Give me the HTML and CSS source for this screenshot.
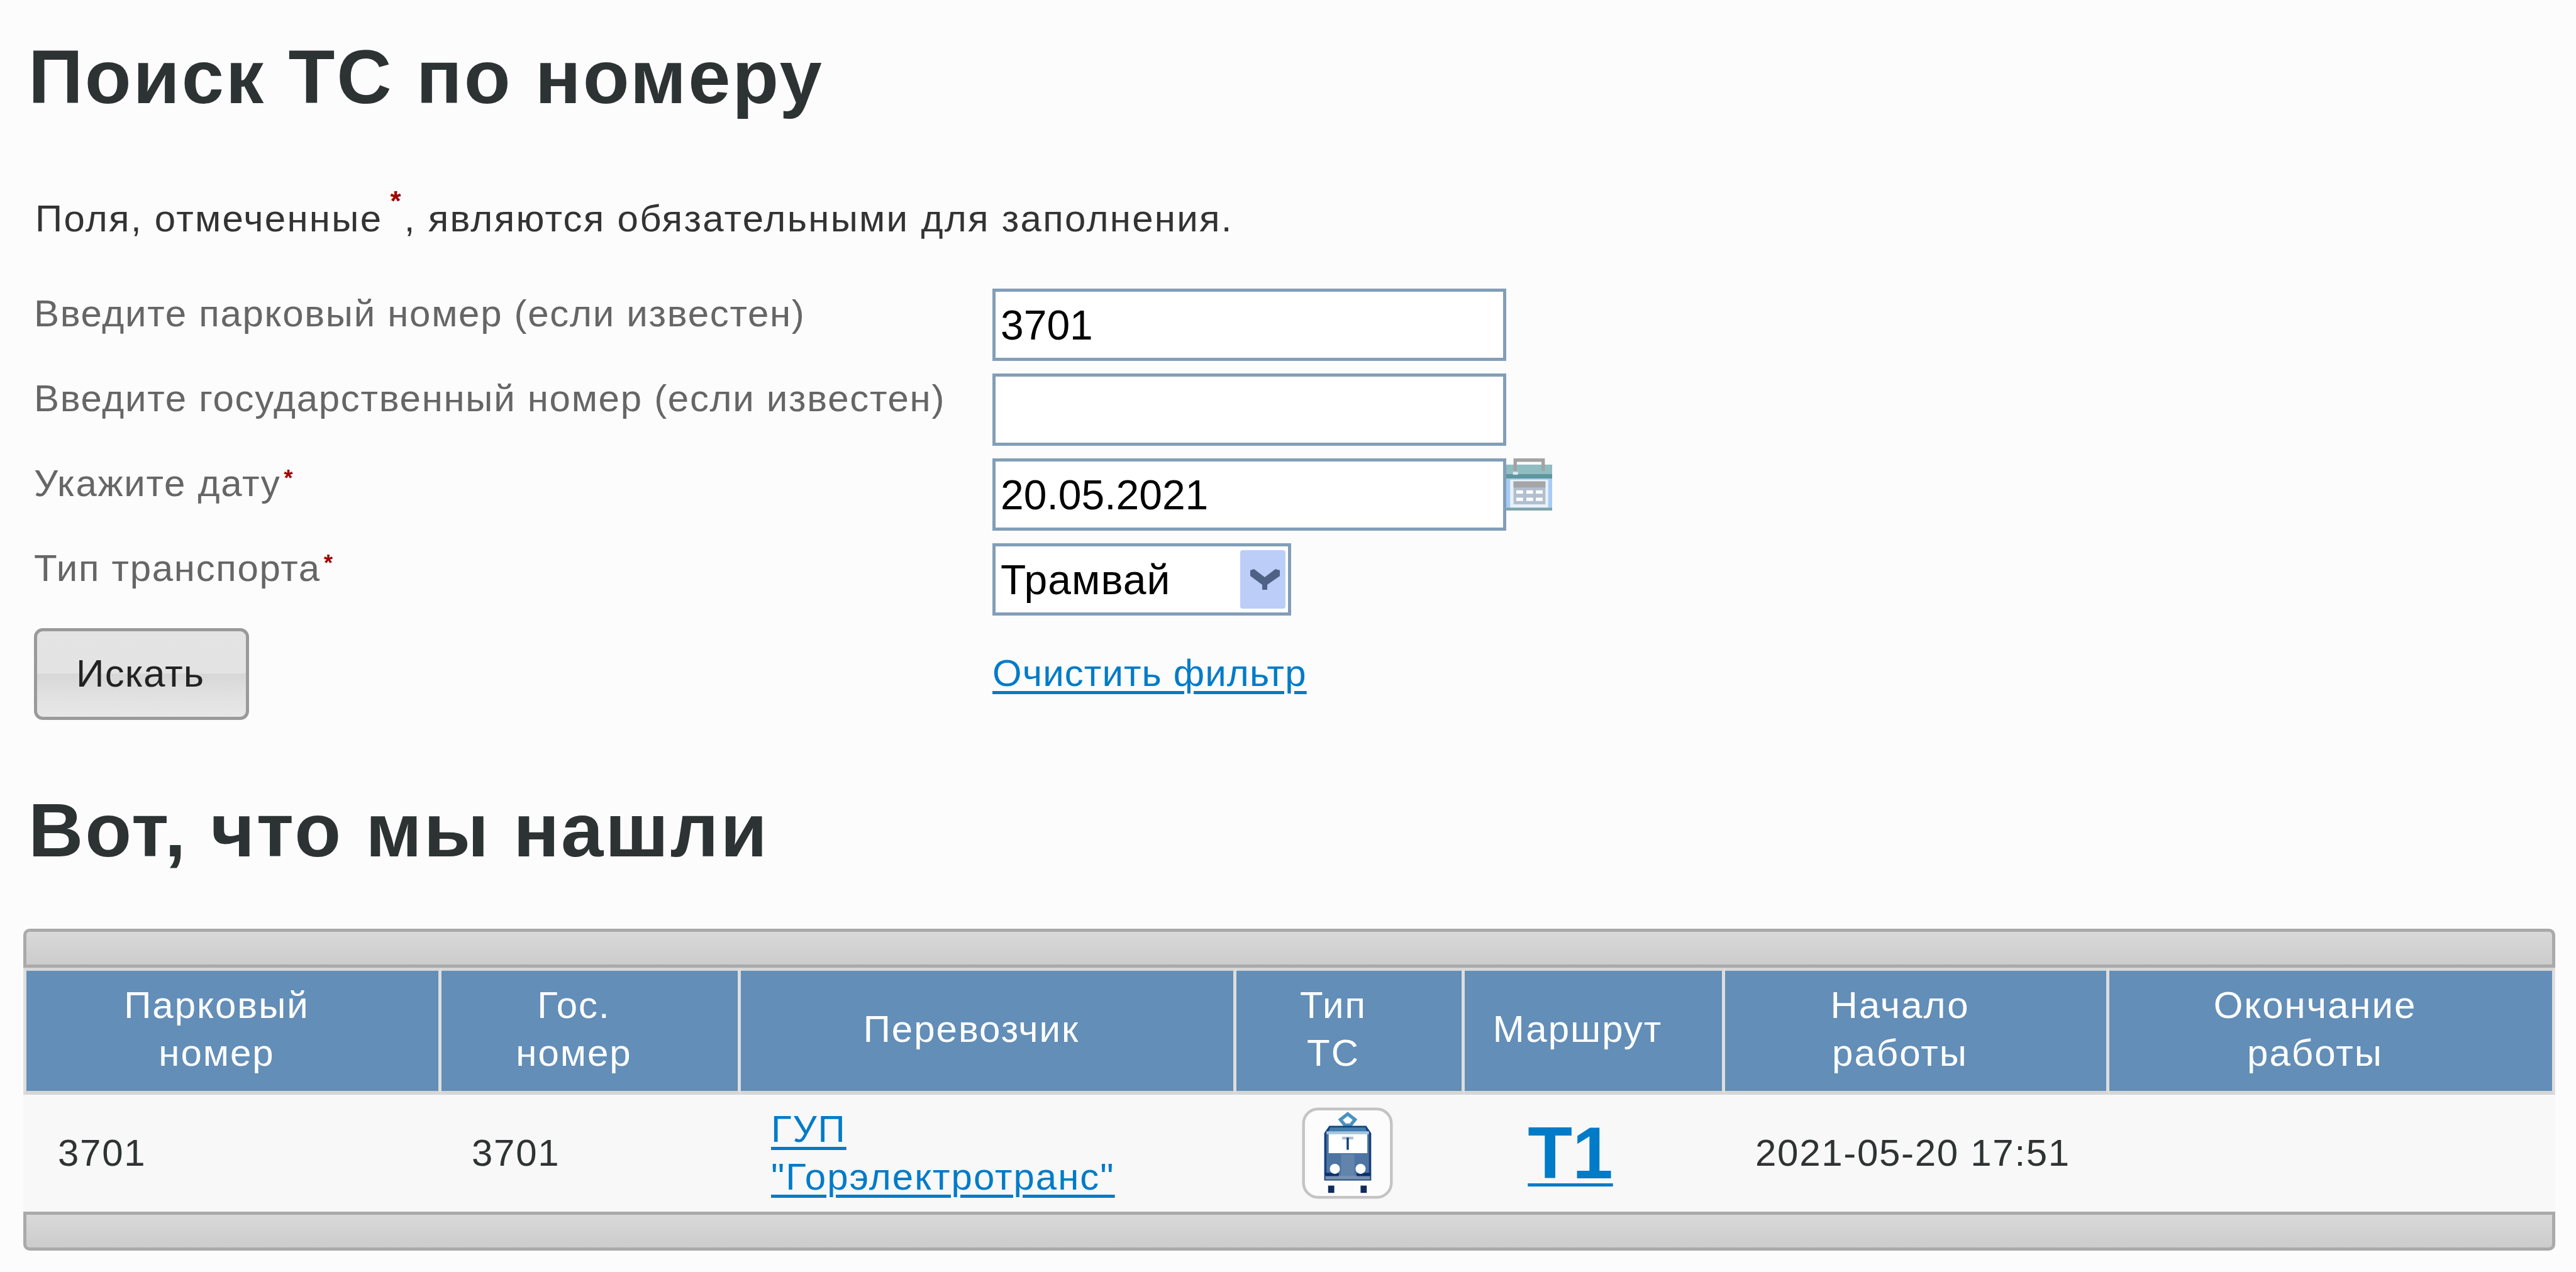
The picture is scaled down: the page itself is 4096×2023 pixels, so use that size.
FILE: index.html
```html
<!DOCTYPE html>
<html lang="ru">
<head>
    <meta charset="UTF-8">
    <title>Поиск ТС по номеру</title>
    <link rel="stylesheet" href="styles.css">
</head>
<body>
    <h1 class="title title-first">Поиск ТС по номеру</h1>
    <p class="note">Поля, отмеченные<span class="star star-note">*</span>, являются обязательными для заполнения.</p>

    <form class="search-form">
        <label class="field-label" for="parkNum">Введите парковый номер (если известен)</label>
        <div class="field"><input class="text-input" type="text" id="parkNum" value="3701"></div>

        <label class="field-label" for="stateNum">Введите государственный номер (если известен)</label>
        <div class="field"><input class="text-input" type="text" id="stateNum"></div>

        <label class="field-label" for="date">Укажите дату<span class="star">*</span></label>
        <div class="field">
            <input class="text-input" type="text" id="date" value="20.05.2021">
            <svg class="calendar-icon" viewBox="0 0 82 93">
                <rect x="0" y="11" width="82" height="25" fill="#8fbdc1"/>
                <rect x="0" y="28" width="82" height="8" fill="#5f979c"/>
                <path d="M16 22V3h50v19" fill="none" stroke="#a3a3a3" stroke-width="6"/>
                <rect x="12" y="24" width="9" height="5" fill="#dfeaf8"/>
                <rect x="0" y="36" width="82" height="57" fill="#a5cbf6"/>
                <rect x="7" y="38" width="68" height="50" fill="#e8f1fb"/>
                <rect x="13" y="41" width="57" height="41" fill="#b1bfce"/>
                <rect x="13" y="41" width="57" height="11" fill="#a5a5a8"/>
                <g fill="#fff">
                    <rect x="18" y="57" width="12" height="6"/><rect x="36" y="57" width="12" height="6"/><rect x="53" y="57" width="12" height="6"/>
                    <rect x="18" y="70" width="12" height="6"/><rect x="36" y="70" width="12" height="6"/><rect x="53" y="70" width="12" height="6"/>
                </g>
                <rect x="0" y="88" width="82" height="5" fill="#7fa4a9"/>
            </svg>
        </div>

        <label class="field-label" for="transport">Тип транспорта<span class="star">*</span></label>
        <div class="field">
            <div class="select-box">
                <select class="select-input" id="transport"><option>Трамвай</option></select>
                <svg class="select-arrow" viewBox="0 0 72 93">
                    <rect width="72" height="93" rx="4" fill="#bccdf8"/>
                    <path d="M16 32l6-2 17 13 17-13 7 2v9L43 55v8h-8v-8L16 41z" fill="#4e6286"/>
                </svg>
            </div>
        </div>

        <div><button class="search-btn" type="button">Искать</button></div>
        <div class="field-link"><a class="link" href="#">Очистить фильтр</a></div>
    </form>

    <h2 class="title title-second">Вот, что мы нашли</h2>

    <div class="grid-wrap">
        <div class="grid-bar grid-bar-top"></div>
        <table class="grid">
            <colgroup>
                <col class="col-1"><col class="col-2"><col class="col-3"><col class="col-4"><col class="col-5"><col class="col-6"><col class="col-7">
            </colgroup>
            <thead>
                <tr>
                    <th>Парковый<br>номер</th>
                    <th>Гос.<br>номер</th>
                    <th>Перевозчик</th>
                    <th>Тип<br>ТС</th>
                    <th>Маршрут</th>
                    <th>Начало<br>работы</th>
                    <th>Окончание<br>работы</th>
                </tr>
            </thead>
            <tbody>
                <tr>
                    <td>3701</td>
                    <td>3701</td>
                    <td><a class="link" href="#">ГУП<br>"Горэлектротранс"</a></td>
                    <td class="cell-center cell-tram">
                        <svg class="tram-icon" viewBox="0 0 163 164">
                            <rect x="3" y="3" width="157" height="158" rx="26" fill="#fcfcfc" stroke="#c4c4c4" stroke-width="5"/>
                            <path d="M82 12l13 10-8 10H77l-8-10z" fill="#fff" stroke="#4b93bf" stroke-width="6"/>
                            <path d="M50 35h64l8 12v82H42V47z" fill="#4d74a3" stroke="#16407c" stroke-width="4"/>
                            <rect x="50" y="36" width="64" height="7" fill="#3f7fae"/>
                            <rect x="44" y="43" width="76" height="5" fill="#a9c6dd"/>
                            <rect x="48" y="48" width="69" height="34" fill="#fff"/>
                            <path d="M72 55h20" fill="none" stroke="#aebfd4" stroke-width="5"/>
                            <path d="M82 54v22" fill="none" stroke="#16407c" stroke-width="4"/>
                            <rect x="70" y="84" width="24" height="38" fill="#6284ab"/>
                            <rect x="42" y="122" width="80" height="7" fill="#7891b0"/>
                            <path d="M42 120h24M98 120h24" fill="none" stroke="#0c2f6e" stroke-width="6"/>
                            <circle cx="59" cy="110" r="9" fill="#fff"/>
                            <circle cx="105" cy="110" r="9" fill="#fff"/>
                            <rect x="47" y="140" width="11" height="13" fill="#0f2b5e"/>
                            <rect x="105" y="140" width="11" height="13" fill="#0f2b5e"/>
                        </svg>
                    </td>
                    <td class="cell-center cell-route"><a class="link route-link" href="#">Т1</a></td>
                    <td>2021-05-20 17:51</td>
                    <td></td>
                </tr>
            </tbody>
        </table>
        <div class="grid-bar grid-bar-bottom"></div>
    </div>
</body>
</html>
```

FILE: styles.css
```css
html, body {
    margin: 0;
    padding: 0;
}

body {
    font-family: "Liberation Sans", Arial, sans-serif;
    font-size: 60px;
    line-height: 76px;
    background-color: #fcfcfc;
    color: #2f3333;
    overflow: hidden;
}

.title {
    font-size: 121px;
    line-height: 140px;
    font-weight: bold;
    color: #2d3232;
    letter-spacing: 2.8px;
    margin: 0;
    padding-left: 45px;
}

.title-first {
    margin-top: 52px;
}

.title-second {
    margin-top: 105px;
}

.note {
    margin: 118px 0 73px;
    padding-left: 56px;
    letter-spacing: 2.3px;
    color: #333;
}

.star {
    color: #a00000;
    font-weight: bold;
    font-size: 36px;
    vertical-align: 16px;
    line-height: 0;
    margin-left: 5px;
}

.star-note {
    font-size: 44px;
    vertical-align: 33px;
    margin: 0 3px 0 12px;
}

.search-form {
    display: grid;
    grid-template-columns: 1524px 1fr;
    row-gap: 20px;
    padding-left: 54px;
}

.field-label {
    padding-top: 2px;
    color: #666;
    letter-spacing: 1.7px;
}

.field {
    display: flex;
    align-items: flex-start;
}

.text-input {
    width: 817px;
    height: 115px;
    box-sizing: border-box;
    border: 5px solid #829eb8;
    background-color: #fff;
    padding: 0 8px;
    font-family: inherit;
    font-size: 66px;
    color: #000;
    outline: none;
}

.calendar-icon {
    width: 73px;
    height: 83px;
    display: block;
}

.select-box {
    position: relative;
    width: 475px;
    height: 115px;
}

.select-input {
    width: 100%;
    height: 100%;
    box-sizing: border-box;
    border: 5px solid #829eb8;
    border-radius: 0;
    background-color: #fff;
    padding: 0 8px;
    font-family: inherit;
    font-size: 66px;
    letter-spacing: 1px;
    color: #000;
    appearance: none;
    outline: none;
}

.select-arrow {
    position: absolute;
    right: 9px;
    top: 11px;
    width: 72px;
    height: 93px;
}

.search-btn {
    display: block;
    width: 342px;
    height: 146px;
    box-sizing: border-box;
    border: 5px solid #9a9a9a;
    border-radius: 14px;
    background: linear-gradient(to bottom, #e4e4e4 0%, #e3e3e3 49%, #d7d7d7 50%, #e0e0e0 72%, #e7e7e7 100%);
    font-family: inherit;
    font-size: 62px;
    letter-spacing: 1px;
    color: #222;
    padding: 0 4px 4px 0;
}

.field-link {
    padding-top: 34px;
}

.link {
    color: #007bc8;
    letter-spacing: 2px;
    text-decoration: underline;
    text-decoration-thickness: 5px;
    text-underline-offset: 8px;
}

.field-link .link {
    letter-spacing: 1.1px;
}

.grid-wrap {
    margin: 87px 33px 0 37px;
}

.grid-bar {
    height: 62px;
    box-sizing: border-box;
    border: 5px solid #aaa;
    background: linear-gradient(to bottom, #d9d9d9, #cccccc);
}

.grid-bar-top {
    border-radius: 10px 10px 0 0;
}

.grid-bar-bottom {
    border-radius: 0 0 10px 10px;
}

.grid {
    width: 100%;
    table-layout: fixed;
    border-collapse: separate;
    border-spacing: 0;
}

.col-1 { width: 665px; }
.col-2 { width: 476px; }
.col-3 { width: 788px; }
.col-4 { width: 363px; }
.col-5 { width: 414px; }
.col-6 { width: 611px; }
.col-7 { width: 709px; }

.grid th {
    height: 202px;
    box-sizing: border-box;
    background-color: #628eb8;
    border-top: 5px solid #d6d6d6;
    border-bottom: 6px solid #d6d6d6;
    border-right: 5px solid #dedede;
    color: #fff;
    font-weight: normal;
    letter-spacing: 2px;
    text-align: center;
    padding: 0 50px 6px 0;
}

.grid th:first-child {
    border-left: 5px solid #dedede;
}

.grid td {
    height: 186px;
    box-sizing: border-box;
    background-color: #f8f8f8;
    letter-spacing: 1.7px;
    padding: 0 0 0 48px;
}

.grid td:first-child {
    padding-left: 55px;
}

.grid td.cell-center {
    text-align: center;
    padding: 0;
}

.grid td.cell-tram {
    padding-right: 10px;
}

.grid td.cell-route {
    padding: 20px 78px 0 0;
}

.tram-icon {
    width: 145px;
    height: 146px;
    display: block;
    margin: 0 auto;
}

.route-link {
    font-size: 116px;
    font-weight: bold;
    letter-spacing: 0;
}
```
